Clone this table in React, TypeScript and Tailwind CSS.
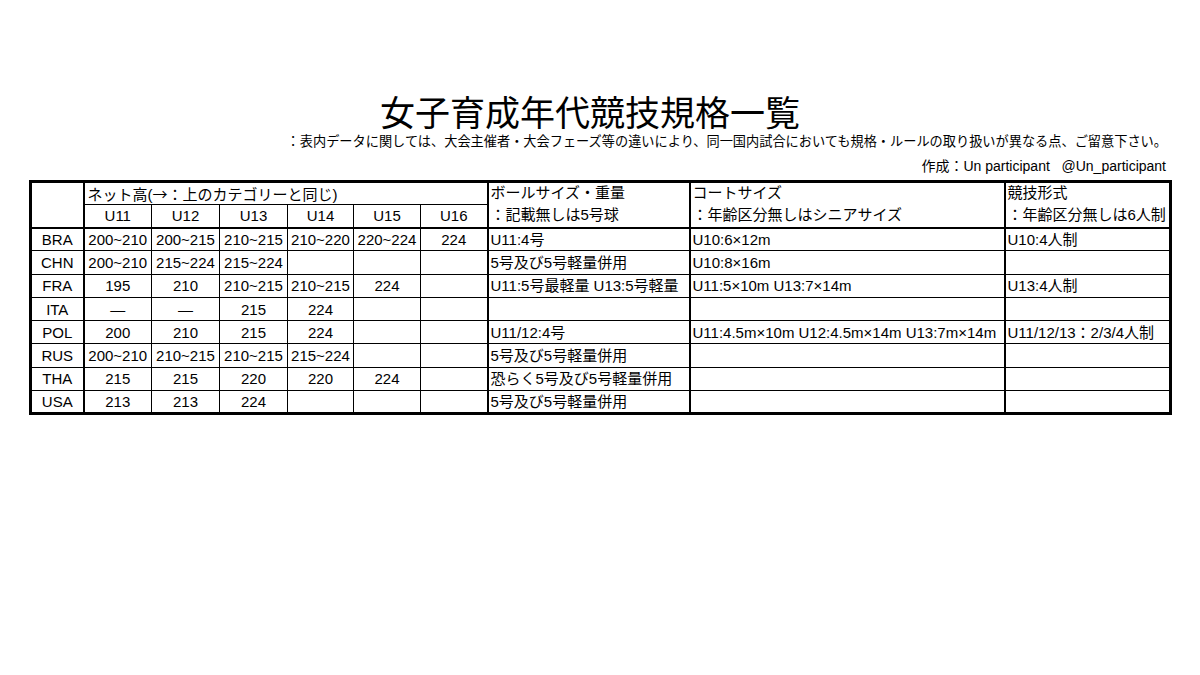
const font = { fontFamily: '"Liberation Sans", "Noto Sans CJK JP", sans-serif' };

type Row = {
  code: string;
  nets: string[];
  ball: string;
  court: string;
  format: string;
};

const rows: Row[] = [
  { code: 'BRA', nets: ['200~210', '200~215', '210~215', '210~220', '220~224', '224'], ball: 'U11:4号', court: 'U10:6×12m', format: 'U10:4人制' },
  { code: 'CHN', nets: ['200~210', '215~224', '215~224', '', '', ''], ball: '5号及び5号軽量併用', court: 'U10:8×16m', format: '' },
  { code: 'FRA', nets: ['195', '210', '210~215', '210~215', '224', ''], ball: 'U11:5号最軽量 U13:5号軽量', court: 'U11:5×10m U13:7×14m', format: 'U13:4人制' },
  { code: 'ITA', nets: ['—', '—', '215', '224', '', ''], ball: '', court: '', format: '' },
  { code: 'POL', nets: ['200', '210', '215', '224', '', ''], ball: 'U11/12:4号', court: 'U11:4.5m×10m U12:4.5m×14m U13:7m×14m', format: 'U11/12/13：2/3/4人制' },
  { code: 'RUS', nets: ['200~210', '210~215', '210~215', '215~224', '', ''], ball: '5号及び5号軽量併用', court: '', format: '' },
  { code: 'THA', nets: ['215', '215', '220', '220', '224', ''], ball: '恐らく5号及び5号軽量併用', court: '', format: '' },
  { code: 'USA', nets: ['213', '213', '224', '', '', ''], ball: '5号及び5号軽量併用', court: '', format: '' },
];

const ages = ['U11', 'U12', 'U13', 'U14', 'U15', 'U16'];

export default function App() {
  return (
    <div className="h-[675px] w-[1200px] bg-white pt-[96px] text-black" style={font}>
      <h1 className="pr-[20px] text-center text-[35px] leading-[35px] font-normal">女子育成年代競技規格一覧</h1>
      <p className="mt-[1px] pr-[33px] text-right text-[13.2px] leading-[20px]">
        ：表内データに関しては、大会主催者・大会フェーズ等の違いにより、同一国内試合においても規格・ルールの取り扱いが異なる点、ご留意下さい。
      </p>
      <p className="mt-[4px] pr-[34px] text-right text-[14px] leading-[20px]">
        作成：Un participant&nbsp;&nbsp;&nbsp;@Un_participant
      </p>

      <table className="mt-[4px] ml-[29px] w-[1140px] table-fixed border-collapse border-[3px] border-black text-[15px] leading-[17px]">
        <colgroup>
          <col className="w-[53px]" />
          <col className="w-[68px]" />
          <col className="w-[68px]" />
          <col className="w-[68px]" />
          <col className="w-[66px]" />
          <col className="w-[67px]" />
          <col className="w-[67px]" />
          <col className="w-[202px]" />
          <col className="w-[315px]" />
          <col className="w-[166px]" />
        </colgroup>
        <thead>
          <tr className="h-[23px]">
            <th rowSpan={2} className="border-r-2 border-b-2 border-black" />
            <th colSpan={6} className="border border-black px-[3px] text-left font-normal">
              ネット高(<span className="font-['Noto_Sans_CJK_JP']">→</span>：上のカテゴリーと同じ)
            </th>
            <th rowSpan={2} className="border-l-2 border-b-2 border-black px-[2px] text-left align-top font-normal">
              <div className="pt-[1px]">ボールサイズ・重量</div>
              <div className="pt-[5px]">：記載無しは5号球</div>
            </th>
            <th rowSpan={2} className="border-l-2 border-b-2 border-black px-[2px] text-left align-top font-normal">
              <div className="pt-[1px]">コートサイズ</div>
              <div className="pt-[5px]">：年齢区分無しはシニアサイズ</div>
            </th>
            <th rowSpan={2} className="border-l-2 border-b-2 border-black px-[2px] text-left align-top font-normal">
              <div className="pt-[1px]">競技形式</div>
              <div className="pt-[5px]">：年齢区分無しは6人制</div>
            </th>
          </tr>
          <tr className="h-[23px]">
            {ages.map((a) => (
              <th key={a} className="border border-b-2 border-black text-center font-normal">
                {a}
              </th>
            ))}
          </tr>
        </thead>
        <tbody>
          {rows.map((r) => (
            <tr key={r.code} className="h-[23.3px]">
              <td className="border border-r-2 border-black text-center">{r.code}</td>
              {r.nets.map((n, i) => (
                <td key={i} className="border border-black text-center">
                  {n}
                </td>
              ))}
              <td className="border border-l-2 border-black px-[2px] whitespace-nowrap">{r.ball}</td>
              <td className="border border-l-2 border-black px-[2px] whitespace-nowrap">{r.court}</td>
              <td className="border border-l-2 border-black px-[2px] whitespace-nowrap">{r.format}</td>
            </tr>
          ))}
        </tbody>
      </table>
    </div>
  );
}
